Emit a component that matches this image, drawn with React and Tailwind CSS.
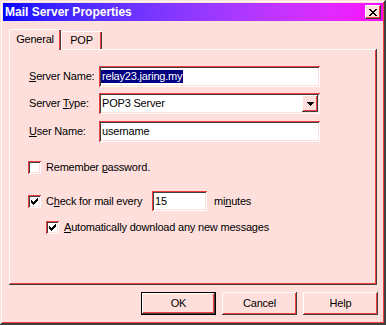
import React from 'react';

// classic 3D bevels, pink scheme
const raised = 'shadow-[inset_-1px_-1px_#404040,inset_1px_1px_#ffffff,inset_-2px_-2px_#f03c3c]';
const sunken = 'shadow-[inset_1px_1px_#f03c3c,inset_-1px_-1px_#ffffff,inset_2px_2px_#404040,inset_-2px_-2px_#ffdfdc]';

const CloseGlyph = () => (
   <svg width="8" height="7" viewBox="0 0 8 7" shapeRendering="crispEdges">
      <path d="M0 0h2v1H0zM6 0h2v1H6zM1 1h2v1H1zM5 1h2v1H5zM2 2h4v1H2zM3 3h2v1H3zM2 4h4v1H2zM1 5h2v1H1zM5 5h2v1H5zM0 6h2v1H0zM6 6h2v1H6z" fill="#000" />
   </svg>
);

const CheckBox = ({ checked }) => (
   <div className={`relative w-[13px] h-[13px] shrink-0 bg-white ${sunken}`}>
      {checked && (
         <svg className="absolute left-[3px] top-[3px]" width="7" height="7" viewBox="0 0 7 7" shapeRendering="crispEdges">
            <path d="M6 0h1v1H6zM5 1h2v1H5zM0 2h1v1H0zM4 2h3v1H4zM0 3h2v1H0zM3 3h3v1H3zM0 4h5v1H0zM1 5h3v1H1zM2 6h1v1H2z" fill="#000" />
         </svg>
      )}
   </div>
);

const Field = ({ label, children }) => (
   <div className="flex items-center h-[21px] pl-[1px]">
      <div className="w-[70px]">{label}</div>
      {children}
   </div>
);

const Button = ({ children, isDefault }) => (
   <div className={`w-[75px] h-[23px] flex items-center justify-center ${isDefault ? 'border border-black' : ''}`}>
      <div className={`w-full h-full flex items-center justify-center ${raised}`}>{children}</div>
   </div>
);

const App = () => {
   return (
      <div className="w-[386px] h-[325px] bg-[#ffdfdc] p-[3px] flex flex-col font-['Liberation_Sans',Arial,sans-serif] text-[11px] leading-[13px] tracking-[-0.2px] text-black shadow-[inset_-1px_-1px_#404040,inset_1px_1px_#ffdfdc,inset_-2px_-2px_#404040,inset_2px_2px_#ffffff,inset_-3px_-3px_#f03c3c]">

         {/* title bar */}
         <div className="h-[18px] flex items-center justify-between pl-[2px] pr-[2px] bg-linear-to-r from-[#0000ff] to-[#ff00ff]">
            <span className="text-white font-bold text-[12px] tracking-normal">Mail Server Properties</span>
            <div className={`w-[16px] h-[14px] bg-[#ffdfdc] flex items-center justify-center ${raised}`}>
               <CloseGlyph />
            </div>
         </div>

         <div className="mx-[6px] mt-[8px] flex flex-col">
            {/* tabs */}
            <div className="flex items-end h-[20px]">
               <div className="relative z-10 -mb-[1px] w-[52px] h-[21px] bg-[#ffdfdc] flex justify-center pt-[4px] shadow-[inset_1px_1px_#ffffff,inset_-1px_0_#404040,inset_-2px_0_#f03c3c]">
                  General
               </div>
               <div className="w-[41px] h-[18px] flex justify-center pt-[3px] shadow-[inset_1px_1px_#ffffff,inset_-1px_0_#404040,inset_-2px_0_#f03c3c]">
                  POP
               </div>
            </div>

            {/* panel */}
            <div className={`w-[368px] h-[236px] pl-[19px] pt-[17px] flex flex-col ${raised}`}>
               <Field label={<><u>S</u>erver Name:</>}>
                  <div className={`w-[221px] h-[21px] bg-white flex items-center pl-[2px] ${sunken}`}>
                     <span className="bg-[#000080] text-white px-[1px]">relay23.jaring.my</span>
                  </div>
               </Field>

               <div className="mt-[6px]">
                  <Field label={<>Server <u>T</u>ype:</>}>
                     <div className={`w-[221px] h-[21px] bg-white flex items-center justify-between p-[2px] pl-[3px] ${sunken}`}>
                        <span>POP3 Server</span>
                        <div className={`w-[16px] h-full bg-[#ffdfdc] flex items-center justify-center ${raised}`}>
                           <svg width="7" height="4" viewBox="0 0 7 4" shapeRendering="crispEdges">
                              <path d="M0 0h7v1H0zM1 1h5v1H1zM2 2h3v1H2zM3 3h1v1H3z" fill="#000" />
                           </svg>
                        </div>
                     </div>
                  </Field>
               </div>

               <div className="mt-[7px]">
                  <Field label={<><u>U</u>ser Name:</>}>
                     <div className={`w-[221px] h-[21px] bg-white flex items-center pl-[3px] ${sunken}`}>
                        username
                     </div>
                  </Field>
               </div>

               <div className="mt-[19px] flex items-center h-[13px] gap-[5px]">
                  <CheckBox />
                  <span>Remember <u>p</u>assword.</span>
               </div>

               <div className="mt-[17px] flex items-center h-[20px]">
                  <CheckBox checked />
                  <span className="ml-[5px] w-[106px]">C<u>h</u>eck for mail every</span>
                  <div className={`w-[55px] h-[20px] bg-white flex items-center pl-[3px] ${sunken}`}>15</div>
                  <span className="ml-[7px]">mi<u>n</u>utes</span>
               </div>

               <div className="mt-[10px] ml-[18px] flex items-center h-[13px] gap-[5px]">
                  <CheckBox checked />
                  <span><u>A</u>utomatically download any new messages</span>
               </div>
            </div>
         </div>

         {/* buttons */}
         <div className="mt-[7px] mr-[5px] flex justify-end gap-[6px]">
            <Button isDefault>OK</Button>
            <Button>Cancel</Button>
            <Button>Help</Button>
         </div>
      </div>
   );
};

export default App;
